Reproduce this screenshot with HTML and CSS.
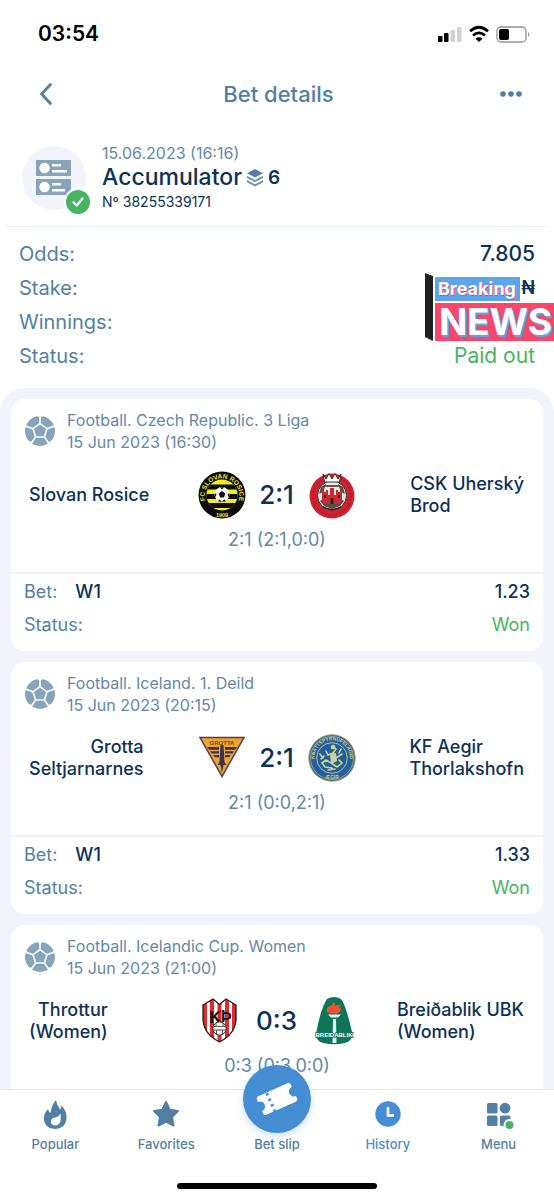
FILE: index.html
```html
<!DOCTYPE html>
<html lang="en">
<head>
<meta charset="utf-8">
<meta name="viewport" content="width=device-width, initial-scale=1">
<title>Bet details</title>
<link rel="stylesheet" href="styles.css">
</head>
<body>
<svg class="sprite" aria-hidden="true">
  <symbol id="ball" viewBox="0 0 30 30">
    <circle cx="15" cy="15" r="15" fill="#86a5bb"/>
    <path d="M15 7.6 22 12.7 19.4 21H10.6L8 12.7ZM15 7.6V0M22 12.7 29.5 10M19.4 21 24 27.5M10.6 21 6 27.5M8 12.7.5 10" fill="none" stroke="#fff" stroke-width="1.6"/>
    <path d="M12.5 0h5L15 2ZM29 7.500 30 12 28 10.700ZM1 7.500 0 12 2 10.700ZM26.500 24.800 22.500 28.300 23 26ZM3.500 24.800 7.500 28.300 7 26Z" fill="#fff"/>
  </symbol>
</svg>
<div class="app">
  <div class="status-bar">
    <span class="clock">03:54</span>
    <svg class="system" width="96" height="20" viewBox="0 0 96 20" aria-hidden="true">
      <rect x="1" y="12" width="4.500" height="6" rx="1"/>
      <rect x="7" y="9" width="4.500" height="9" rx="1"/>
      <g fill="#d2d2d2"><rect x="13.500" y="6" width="4.500" height="12" rx="1"/><rect x="20" y="3" width="4.500" height="15" rx="1"/></g>
      <path d="M33 7.300q9-8 18 0M36 11.500q6-5.200 12 0" fill="none" stroke="#000" stroke-width="2.800"/>
      <path d="M42 18 38.500 14.700q3.500-2.800 7 0Z"/>
      <rect x="60" y="3" width="29" height="15" rx="4" fill="none" stroke="#929292" stroke-width="1.300"/>
      <rect x="62" y="5" width="10" height="11" rx="2"/>
      <path d="M91 8q2.500 2.500 0 5Z" fill="#929292"/>
    </svg>
  </div>

  <header class="header">
    <button class="icon-button" aria-label="Back"><svg width="14" height="24" viewBox="0 0 14 24"><path d="M11.500 2.500 2.500 12 11.500 21.500" fill="none" stroke="#527fa3" stroke-width="2.800" stroke-linecap="round" stroke-linejoin="round"/></svg></button>
    <h1>Bet details</h1>
    <button class="icon-button" aria-label="More"><svg width="24" height="8" viewBox="0 0 24 8" fill="#527fa3"><circle cx="4" cy="4" r="2.800"/><circle cx="12" cy="4" r="2.800"/><circle cx="20" cy="4" r="2.800"/></svg></button>
  </header>

  <section class="bet">
    <div class="avatar">
      <svg width="36" height="38" viewBox="0 0 36 38" aria-hidden="true">
        <path d="M0 1h35v16H0ZM0 20h35v13L32 36H0Z" fill="#86a5bb"/>
        <g fill="#fff"><circle cx="8.500" cy="9" r="5.200"/><circle cx="8.500" cy="28" r="5.200"/><path d="M16 5h9v2.500h-9ZM16 11h15v2.500H16ZM16 24h9v2.500h-9ZM16 30h13v2.500H16Z"/></g>
      </svg>
      <svg class="check" width="28" height="28" viewBox="0 0 28 28" aria-hidden="true"><circle cx="14" cy="14" r="14" fill="#fff"/><circle cx="14" cy="14" r="12" fill="#47b363"/><path d="M9.500 14.300 12.800 17.500 18.500 10.500" fill="none" stroke="#fff" stroke-width="2.200" stroke-linecap="round" stroke-linejoin="round"/></svg>
    </div>
    <div>
      <div class="date">15.06.2023 (16:16)</div>
      <h2>Accumulator <svg width="16" height="18" viewBox="0 0 16 18" aria-hidden="true"><path d="M8 0 16 4.300 8 8.500 0 4.300Z" fill="#527fa3"/><path d="M0 6.700 8 10.900 16 6.700V9L8 13.200 0 9ZM0 11 8 15.200 16 11V13.300L8 17.500 0 13.300Z" fill="#6f93b0"/></svg> <span class="count">6</span></h2>
      <div class="number">Nº 38255339171</div>
    </div>
  </section>

  <section class="summary">
    <dl>
      <div><dt>Odds:</dt><dd>7.805</dd></div>
      <div><dt>Stake:</dt><dd class="currency">₦</dd></div>
      <div><dt>Winnings:</dt><dd></dd></div>
      <div><dt>Status:</dt><dd class="good">Paid out</dd></div>
    </dl>
    <div class="sticker">
      <svg width="8" height="68" viewBox="0 0 8 68" aria-hidden="true"><path d="M0 0 8 3V68L0 64Z" fill="#202124"/></svg>
      <div class="sticker-text"><span class="breaking">Breaking</span><span class="news">NEWS</span></div>
    </div>
  </section>

  <main class="list">
    <article class="card">
      <header class="event"><svg class="ball"><use href="#ball"/></svg><div>Football. Czech Republic. 3 Liga<br>15 Jun 2023 (16:30)</div></header>
      <div class="match">
        <div class="team home">Slovan Rosice</div>
        <svg class="crest" viewBox="0 0 48 48" role="img" aria-label="FC Slovan Rosice">
          <defs><path id="arc-a" d="M8.500 32.500A17.300 17.300 0 1 1 39.500 32.500"/><clipPath id="in-a"><circle cx="24" cy="24" r="15.500"/></clipPath></defs>
          <circle cx="24" cy="24" r="23.500" fill="#0b0b08"/><circle cx="24" cy="24" r="15.500" fill="#f3ec20"/>
          <path clip-path="url(#in-a)" d="M8 13.500h32v5H8ZM8 23h32v5H8ZM8 32h32v5H8Z" fill="#0b0b08"/>
          <circle cx="24" cy="23.500" r="7.500" fill="#fff"/><path d="M24 20 27.300 22.500 26 26.400H22L20.700 22.500ZM21.800 16.300h4.400L24 18.500ZM16.500 22 18.500 23.200 17.500 26.500ZM31.500 22 29.500 23.200 30.500 26.500ZM20 30.500 21.500 28.300 24 31ZM28 30.500 26.500 28.300 24 31Z" fill="#111"/>
          <text class="crest-text" font-size="6.500" fill="#f3ec20"><textPath href="#arc-a" startOffset="50%" text-anchor="middle">FC SLOVAN ROSICE</textPath></text>
          <text class="crest-text" x="24" y="45.500" font-size="5.500" text-anchor="middle" fill="#f3ec20">1909</text>
        </svg>
        <div class="score">2:1</div>
        <svg class="crest" viewBox="0 0 48 48" role="img" aria-label="CSK Uherský Brod">
          <circle cx="24" cy="25" r="22.500" fill="#d01f31"/>
          <circle cx="24" cy="25" r="19" fill="none" stroke="#a81b2a" stroke-width="2" stroke-dasharray="1.500 2"/>
          <circle cx="24" cy="24.500" r="14.500" fill="#ece8e4" stroke="#35302c"/>
          <path d="M15 3 18 8 21 2.500 24 8 27 2.500 30 8 33 3 31.500 11h-15Z" fill="#fff" stroke="#333"/>
          <path d="M13 16 18 13 15 21 11 23ZM35 16 30 13 33 21 37 23ZM12 30 16 35 24 38 32 35 36 30 33 28H15Z" fill="#55504b"/>
          <path d="M14 19h2v2h2v-2h2v5h2v-7h4v7h2v-5h2v2h2v-2h2v14H14Z" fill="#ce2937"/><path d="M22.500 27h3v6h-3ZM16 24h2v3h-2ZM30 24h2v3h-2Z" fill="#40201f"/>
          <path d="M17 15h14M15 36q9 5 18 0" stroke="#302e2b" fill="none" stroke-width="1.500"/>
        </svg>
        <div class="team away">CSK Uherský<br>Brod</div>
      </div>
      <div class="periods">2:1 (2:1,0:0)</div>
      <dl class="result"><div><dt>Bet:</dt><dd class="pick">W1</dd><dd>1.23</dd></div><div><dt>Status:</dt><dd class="good">Won</dd></div></dl>
    </article>

    <article class="card">
      <header class="event"><svg class="ball"><use href="#ball"/></svg><div>Football. Iceland. 1. Deild<br>15 Jun 2023 (20:15)</div></header>
      <div class="match">
        <div class="team home">Grotta<br>Seltjarnarnes</div>
        <svg class="crest" viewBox="0 0 48 48" role="img" aria-label="Grotta">
          <path d="M2 3.500H46L24 42.500Z" fill="#efa42b" stroke="#4f3b58" stroke-width="1.500"/>
          <text class="crest-text" x="24" y="10.500" font-size="6" text-anchor="middle" fill="#6d4a2e">GROTTA</text>
          <path d="M9 13H21V15.800H11ZM12 17.300H21V19.500H13.500ZM15 21H21V23.200H17ZM39 13H27V15.800H37ZM36 17.300H27V19.500H34.500ZM33 21H27V23.200H31ZM22.500 11h3l1 17 2 3h-3L24 39 22.500 31h-3l2-3Z" fill="#3b3155"/>
        </svg>
        <div class="score">2:1</div>
        <svg class="crest" viewBox="0 0 48 48" role="img" aria-label="Aegir">
          <defs><path id="arc-b" d="M10.500 35.500A17.700 17.700 0 1 1 37.500 35.500"/></defs>
          <circle cx="24" cy="24" r="23.200" fill="#2361a0" stroke="#9f9a5c"/><circle cx="24" cy="24" r="21.500" fill="none" stroke="#c3bb72" stroke-width=".7"/><circle cx="24" cy="24" r="15.300" fill="#1c5eaa" stroke="#c7c06e"/>
          <text class="crest-text" font-size="4.800" fill="#d5cf8a"><textPath href="#arc-b" startOffset="50%" text-anchor="middle">KNATTSPYRNUFELAGID</textPath></text>
          <text class="crest-text" x="24" y="44.500" font-size="4.800" text-anchor="middle" fill="#d5cf8a">ÆGIR</text>
          <g fill="none" stroke="#dcd66f" stroke-width="1.600" stroke-linecap="round"><path d="M25 12 28 15 25 19 28 24 23 29 18 26M25 19 20 21 18 17M28 24 34 20M23 29 29 33 34 29 31 26M18 26 14 29 17 33 24 34M12 20 15 24M33 15 31 19M13 25 16 22M20 36 27 35"/></g>
          <circle cx="25" cy="13" r="2.300" fill="#dcd66f"/><path d="M22 20 28 19 29 27 23 30Z" fill="#cbd39a"/>
        </svg>
        <div class="team away">KF Aegir<br>Thorlakshofn</div>
      </div>
      <div class="periods">2:1 (0:0,2:1)</div>
      <dl class="result"><div><dt>Bet:</dt><dd class="pick">W1</dd><dd>1.33</dd></div><div><dt>Status:</dt><dd class="good">Won</dd></div></dl>
    </article>

    <article class="card">
      <header class="event"><svg class="ball"><use href="#ball"/></svg><div>Football. Icelandic Cup. Women<br>15 Jun 2023 (21:00)</div></header>
      <div class="match">
        <div class="team home">Throttur<br>(Women)</div>
        <svg class="crest" viewBox="0 0 48 48" role="img" aria-label="Throttur">
          <defs><clipPath id="shield"><path d="M5 8 15 2 21.500 7.500 28 2 38 8V23Q37 37 21.500 45 6 37 5 23Z"/></clipPath></defs>
          <path d="M5 8 15 2 21.500 7.500 28 2 38 8V23Q37 37 21.500 45 6 37 5 23Z" fill="#fff"/>
          <path clip-path="url(#shield)" d="M4 0h5v45H4ZM12 0h4v45h-4ZM19.500 0h4v45h-4ZM27 0h4v45h-4ZM34 0h5v45h-5Z" fill="#e42b2c"/>
          <path d="M5 8 15 2 21.500 7.500 28 2 38 8V23Q37 37 21.500 45 6 37 5 23Z" fill="none" stroke="#20191a" stroke-width="1.300"/>
          <text class="crest-text" x="11" y="26" font-size="17" fill="#111">K</text><text class="crest-text" x="23" y="25" font-size="16" fill="#111">Þ</text>
          <circle cx="21.500" cy="31.500" r="6.700" fill="#f7f4f1" stroke="#222"/><path d="M15.500 29.500h12M15 33h13M18 26v3.500M25 26v3.500M18.500 33v4M24.500 33v4" stroke="#555" stroke-width="1"/>
        </svg>
        <div class="score">0:3</div>
        <svg class="crest" viewBox="0 0 48 48" role="img" aria-label="Breidablik">
          <path d="M19 2Q26-2 33 2 38 8 44.500 37 44 44 37 46 26 48.500 15 46 8 44 8 37 13 10 19 2Z" fill="#0f7558"/>
          <path d="M19 15Q18 10 22 9 25 8 25 5 28 7 26.500 9 32 7 33 8 30 9 33 11 33 15 29 16.500H22Z" fill="#ee5134"/>
          <path d="M20 17.500h13l-3 3H23ZM25 22h3l.5 24h-4Z" fill="#e8f1ed"/>
          <text class="crest-text" x="26" y="40" font-size="6" text-anchor="middle" fill="#fff" stroke="#0f7558" stroke-width="1.500" paint-order="stroke">BREIDABLIK</text>
        </svg>
        <div class="team away">Breiðablik UBK<br>(Women)</div>
      </div>
      <div class="periods">0:3 (0:3,0:0)</div>
    </article>
  </main>

  <nav class="tabs">
    <a href="#popular"><svg class="tab-icon" viewBox="0 0 30 30"><path d="M16 1Q17 7 20 10.500 21.500 9 21.500 6.500 27 12 26.500 19.500 25.500 30 15 30 4.500 29.500 3.800 20 3.500 15 8 10 8.500 13 10.500 14 11.500 6 16 1Z" fill="#527fa3"/><path d="M20.500 14.500Q22 26.500 15 26.500 10.500 26 11 21.500 12 18.500 15.500 18.500 18.500 18 20.500 14.500Z" fill="#fff"/></svg>Popular</a>
    <a href="#favorites"><svg class="tab-icon" viewBox="0 0 30 30"><path d="M15 3 18.700 10.800 27 12 21 18 22.500 26.500 15 22.500 7.500 26.500 9 18 3 12 11.300 10.800Z" fill="#527fa3" stroke="#527fa3" stroke-width="2" stroke-linejoin="round"/></svg>Favorites</a>
    <a href="#slip"><span class="slip"><svg width="46" height="46" viewBox="0 0 46 46" aria-hidden="true"><g transform="rotate(-24 23 23)"><path d="M7 13H39Q41.500 13 41.500 15.500V18A5 5 0 0 0 41.500 28V30.500Q41.500 33 39 33H7Q4.500 33 4.500 30.500V28A5 5 0 0 0 4.500 18V15.500Q4.500 13 7 13Z" fill="#fff"/><path d="M16 12.500V34" stroke="#468ed3" stroke-width="3" stroke-dasharray="2.500 3.500" stroke-dashoffset="-1" fill="none"/></g></svg></span>Bet slip</a>
    <a href="#history" class="active" aria-current="page"><svg class="tab-icon" viewBox="0 0 30 30"><circle cx="15" cy="15" r="12.700" fill="#468ed3"/><path d="M15 8V16.500H21" fill="none" stroke="#fff" stroke-width="2.600"/></svg>History</a>
    <a href="#menu"><svg class="tab-icon" viewBox="0 0 30 30"><g fill="#527fa3"><rect x="3" y="4" width="10.500" height="10.500" rx="1.500"/><circle cx="21" cy="9.200" r="5.400"/><rect x="3" y="16.500" width="10.500" height="10.500" rx="1.500"/><rect x="16" y="16.500" width="10.500" height="10.500" rx="1.500"/></g><circle cx="25.500" cy="26" r="6" fill="#fff"/><circle cx="25.500" cy="26" r="4" fill="#47b363"/></svg>Menu</a>
  </nav>
  <div class="home-indicator"></div>
</div>
</body>
</html>
```
FILE: styles.css
```css
* { box-sizing: border-box; }

body {
  margin: 0;
  background: #fff;
  color: #0d3157;
  font-family: Inter, "Liberation Sans", sans-serif;
}

h1, h2, dl, dd { margin: 0; }

.sprite { display: none; }

.app {
  display: flex;
  flex-direction: column;
  height: 100vh;
  overflow: hidden;
}

.status-bar {
  display: flex;
  flex: none;
  align-items: center;
  justify-content: space-between;
  height: 67px;
  padding: 0 21px 0 38px;
  color: #000;
}

.clock { font-size: 21px; font-weight: 600; }

.header {
  display: flex;
  flex: none;
  align-items: center;
  justify-content: space-between;
  height: 53px;
  padding: 0 23px 0 26px;
  color: #527fa3;
}

.header h1 { font-size: 22px; font-weight: 500; }

.icon-button {
  display: flex;
  align-items: center;
  justify-content: center;
  width: 40px;
  height: 40px;
  padding: 0;
  border: 0;
  background: none;
}

.bet {
  display: flex;
  flex: none;
  align-items: center;
  gap: 16px;
  margin: 0 6px;
  padding: 22px 16px 13px;
  border-bottom: 1px solid #e6eef4;
}

.avatar {
  position: relative;
  display: flex;
  align-items: center;
  justify-content: center;
  width: 64px;
  height: 64px;
  border-radius: 50%;
  background: #f3f4fb;
}

.check { position: absolute; right: -6px; bottom: -6px; }

.date { color: #6388a9; font-size: 16px; line-height: 22px; }

.bet h2 {
  display: flex;
  align-items: center;
  gap: 5px;
  font-size: 23px;
  font-weight: 500;
  line-height: 27px;
}

.count { font-size: 19px; font-weight: 600; }

.number { font-size: 14px; line-height: 22px; }

.summary {
  position: relative;
  flex: none;
  padding: 10px 19px 15px;
  font-size: 20px;
}

.summary dl div { display: flex; justify-content: space-between; line-height: 34px; }

dt { color: #527fa3; }

dd { font-weight: 500; }

.summary dd { font-size: 21px; }

.summary .currency { font-size: 18px; font-weight: 600; }

dd.good { color: #47b363; font-weight: 400; }

.sticker {
  position: absolute;
  top: 46px;
  right: 0;
  display: flex;
  gap: 2px;
}

.sticker-text {
  display: flex;
  flex-direction: column;
  align-items: flex-start;
  gap: 2px;
  padding-top: 4px;
}

.breaking, .news { color: #fff; font-weight: 700; }

.breaking {
  padding: 0 4px 0 3px;
  background: #5ba6ea;
  font-size: 18px;
  line-height: 24px;
  text-shadow: 1px 1px #f2436b;
}

.news {
  padding: 0 2px 0 4px;
  background: #fa466b;
  font-size: 37px;
  line-height: 38px;
  text-shadow: 2px 2px #5ba6ea;
}

.list {
  display: flex;
  flex: 1;
  flex-direction: column;
  gap: 11px;
  min-height: 0;
  padding: 11px 11px 0;
  overflow: hidden;
  border-radius: 24px 24px 0 0;
  background: #f3f4fb;
}

.card {
  flex: none;
  border-radius: 14px;
  background: #fff;
}

.card:last-child { padding-bottom: 80px; }

.event {
  display: flex;
  align-items: center;
  gap: 12px;
  padding: 10px 14px 18px;
  color: #6388a9;
  font-size: 16px;
  line-height: 22px;
}

.ball { width: 30px; height: 30px; }

.match {
  display: grid;
  grid-template-columns: 1fr 48px 62px 48px 1fr;
  align-items: center;
  padding: 0 19px 0 18px;
  font-size: 18px;
  font-weight: 500;
  line-height: 22px;
}

.home { justify-self: start; text-align: right; }

.away { justify-self: end; }

.crest { width: 48px; height: 48px; }

.crest-text { font-family: "Liberation Sans", sans-serif; font-weight: 700; }

.score { font-size: 26px; text-align: center; }

.periods {
  padding: 10px 0 21px;
  color: #6388a9;
  font-size: 18px;
  line-height: 22px;
  text-align: center;
}

.result {
  padding: 1px 13px 10px;
  border-top: 2px solid #f0f2f8;
  font-size: 18px;
  line-height: 33px;
}

.result div { display: flex; }

.result dd:last-child { margin-left: auto; }

.pick { margin-left: 18px; }

.tabs {
  position: relative;
  display: grid;
  flex: none;
  grid-template-columns: repeat(5, 1fr);
  height: 94px;
  border-top: 1px solid #e0e7ee;
  background: #fff;
}

.tabs a {
  display: flex;
  flex-direction: column;
  align-items: center;
  gap: 5px;
  padding-top: 9px;
  color: #527fa3;
  font-size: 13px;
  font-weight: 500;
  line-height: 20px;
  text-decoration: none;
}

.tabs .active { color: #468ed3; }

.tab-icon { width: 30px; height: 30px; }

.slip {
  display: flex;
  align-items: center;
  justify-content: center;
  width: 68px;
  height: 68px;
  margin-top: -34px;
  margin-bottom: -4px;
  border-radius: 50%;
  background: #468ed3;
  box-shadow: 0 3px 8px #468ed340;
}

.home-indicator {
  flex: none;
  width: 36%;
  height: 6px;
  margin: 0 auto 11px;
  border-radius: 3px;
  background: #000;
}
```
